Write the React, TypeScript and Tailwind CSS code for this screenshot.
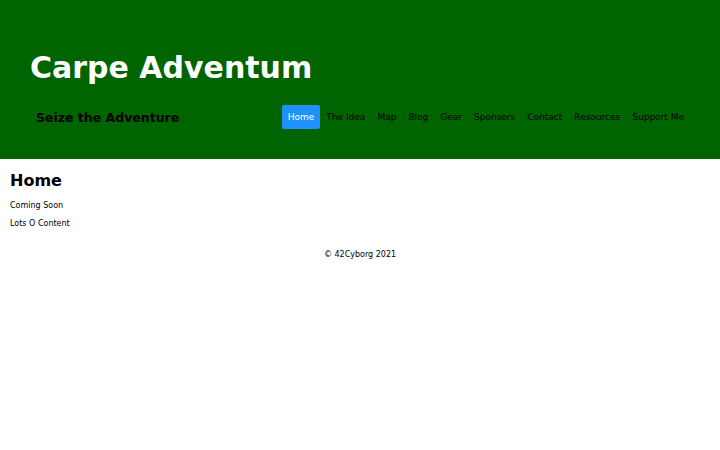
const navItems = ['Home', 'The Idea', 'Map', 'Blog', 'Gear', 'Sponsors', 'Contact', 'Resources', 'Support Me'];

export default function App() {
  const active = 'Home';

  return (
    <div className="min-h-screen bg-white text-black font-['DejaVu_Sans',sans-serif]">
      {/* Banner */}
      <header className="bg-[#006400] px-[30px] pt-[50px] pb-[30px]">
        <h1 className="text-[30px] leading-[35px] font-bold text-white">Carpe Adventum</h1>
        <div className="mt-[20px] flex items-center justify-between">
          <h3 className="pl-[6px] text-[12.5px] font-bold leading-[15px]">Seize the Adventure</h3>
          <nav className="flex items-center">
            {navItems.map((item) => (
              <a
                key={item}
                href="#"
                className={`flex h-[24px] items-center rounded-[2px] px-[6px] text-[9px] leading-[11px] ${
                  item === active ? 'bg-[#1e90ff] text-white' : 'text-black'
                }`}
              >
                {item}
              </a>
            ))}
          </nav>
        </div>
      </header>

      {/* Content */}
      <main className="px-[10px]">
        <h2 className="mt-[12px] mb-[11px] text-[16px] leading-[19px] font-bold">Home</h2>
        <p className="text-[8px] leading-[10px]">Coming Soon</p>
        <p className="mt-[8px] text-[8px] leading-[10px]">Lots O Content</p>
      </main>

      <footer className="mt-[21px] text-center text-[8px] leading-[10px]">© 42Cyborg 2021</footer>
    </div>
  );
}
